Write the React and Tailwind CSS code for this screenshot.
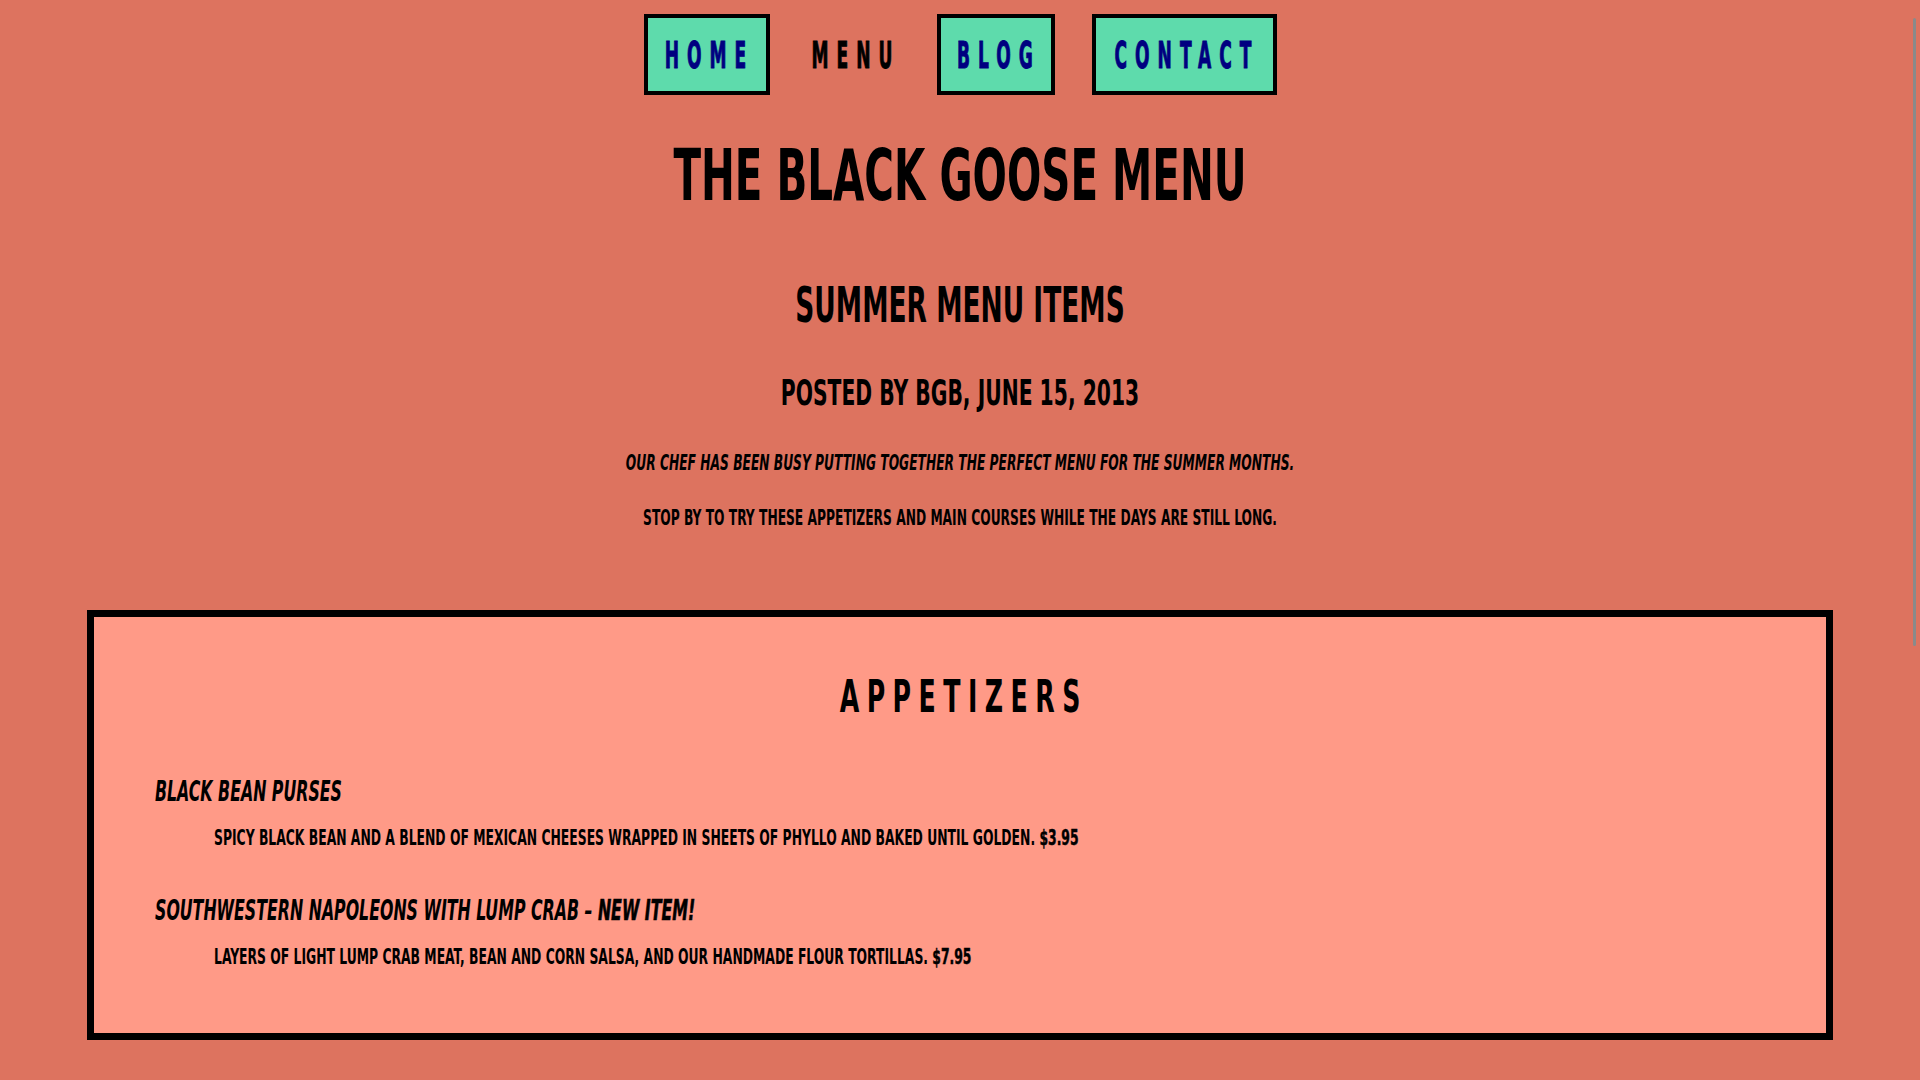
import React from "react";

const font = "font-['Liberation_Sans_Narrow','DejaVu_Sans_Condensed','Liberation_Sans',sans-serif]";

const NavItem = ({ label, boxed, width }) => (
  <div
    className={
      boxed
        ? `h-[81px] ${width} flex items-center justify-center border-[4px] border-black bg-[#5edbac] text-[#000080]`
        : `h-[81px] ${width} flex items-center justify-center text-black`
    }
  >
    <span className="block text-[38px] leading-none font-bold tracking-[16px] scale-x-[0.5] origin-center pl-[12px] [-webkit-text-stroke:1px_currentColor]">
      {label}
    </span>
  </div>
);

const MenuItem = ({ name, children, first }) => (
  <div className={first ? "mt-[59px]" : "mt-[48px]"}>
    <h3 className="text-[28px] leading-none font-bold italic scale-x-[0.627] origin-left whitespace-nowrap">
      {name}
    </h3>
    <p className="mt-[21px] pl-[59px] text-[22px] leading-none font-bold whitespace-nowrap">
      <span className="block scale-x-[0.625] origin-left">{children}</span>
    </p>
  </div>
);

export default function App() {
  return (
    <div className={`relative h-[1080px] overflow-hidden bg-[#dd735f] uppercase text-black ${font}`}>
      <nav className="flex justify-center gap-[37px] pt-[14px]">
        <NavItem label="Home" boxed width="w-[126px]" />
        <NavItem label="Menu" width="w-[93px]" />
        <NavItem label="Blog" boxed width="w-[118px]" />
        <NavItem label="Contact" boxed width="w-[185px]" />
      </nav>

      <header className="text-center">
        <h1 className="mt-[44px] text-[72px] leading-none font-bold scale-x-[0.624]">The Black Goose Menu</h1>
        <h2 className="mt-[70px] text-[49px] leading-none font-bold scale-x-[0.6]">Summer Menu Items</h2>
        <h3 className="mt-[46px] text-[35px] leading-none font-bold scale-x-[0.645]">Posted by BGB, June 15, 2013</h3>
        <p className="mt-[41px] text-[22px] leading-none font-bold italic scale-x-[0.62]">
          Our chef has been busy putting together the perfect menu for the summer months.
        </p>
        <p className="mt-[33px] text-[22px] leading-none font-bold scale-x-[0.62]">
          Stop by to try these appetizers and main courses while the days are still long.
        </p>
      </header>

      <section className="mx-[87px] mt-[81px] h-[430px] border-[7px] border-black bg-[#ff9a87] pt-[57px] pl-[61px]">
        <h2 className="text-center text-[45px] leading-none font-bold tracking-[12px] scale-x-[0.623] pl-[12px] -ml-[61px]">
          Appetizers
        </h2>
        <MenuItem name="Black Bean Purses" first>
          Spicy black bean and a blend of Mexican cheeses wrapped in sheets of phyllo and baked until golden.{" "}
          <strong className="[-webkit-text-stroke:0.5px_black]">$3.95</strong>
        </MenuItem>
        <MenuItem
          name={
            <>
              Southwestern Napoleons with Lump Crab –{" "}
              <strong className="[-webkit-text-stroke:0.6px_black]">New Item!</strong>
            </>
          }
        >
          Layers of light lump crab meat, bean and corn salsa, and our handmade flour tortillas.{" "}
          <strong className="[-webkit-text-stroke:0.5px_black]">$7.95</strong>
        </MenuItem>
      </section>

      {/* overlay scrollbar thumb */}
      <div className="absolute right-[4px] top-[18px] h-[628px] w-[3px] rounded-full bg-[#8a8a8a]" />
    </div>
  );
}
